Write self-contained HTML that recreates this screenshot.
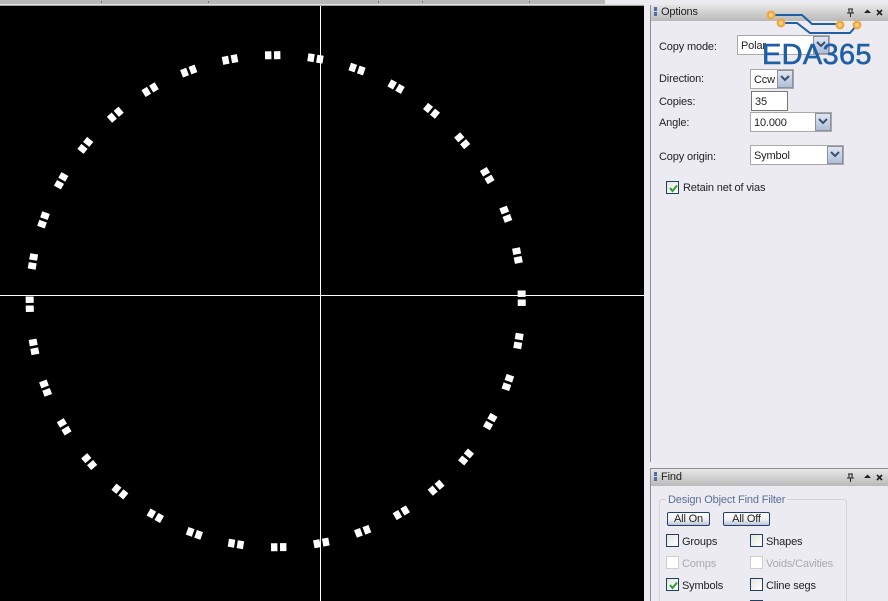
<!DOCTYPE html>
<html style="overflow:hidden;width:888px;height:601px"><head><meta charset="utf-8"><style>
html,body{margin:0;padding:0}
body{width:888px;height:601px;overflow:hidden;position:relative;background:#ecebf1;font-family:"Liberation Sans",sans-serif;font-size:11px;letter-spacing:-.15px;color:#222}
#w{position:absolute;left:0;top:0;width:888px;height:601px;overflow:hidden;background:#ecebf1}
.a{position:absolute}
.t{position:absolute;white-space:nowrap;line-height:14px}
.h{position:absolute;left:651px;width:237px;background:linear-gradient(#e8e8e8,#b9b9b9)}
.c{position:absolute;background:#fff;border:1px solid #a9a9ad;box-sizing:border-box;line-height:20px;padding-left:3px;white-space:nowrap}
.b{position:absolute;top:0;right:0;bottom:0;width:16px;background:linear-gradient(#dfe6f2,#aebfdc);border:1px solid #8d9096;box-sizing:border-box}
.b svg{position:absolute;left:2px;top:4px}
.k{position:absolute;width:13px;height:13px;box-sizing:border-box;border:1px solid #1f3f63;background:linear-gradient(135deg,#e4e4de,#fff)}
.k.d{border-color:#cfcfd2;background:#fff}
.btn{position:absolute;height:14px;box-sizing:border-box;border:1px solid #1f3f76;border-radius:2px;background:linear-gradient(#fff,#f0f0f0 55%,#b9c6da);text-align:center;line-height:13px}
.tk{position:absolute;top:1px;width:1px;height:2px;background:#777}
</style></head><body><div id="w">
<div class="a" style="left:0;top:0;width:605px;height:4px;background:#b7b7b7"></div>
<div class="tk" style="left:101px"></div><div class="tk" style="left:208px"></div><div class="tk" style="left:378px"></div><div class="tk" style="left:422px"></div><div class="tk" style="left:529px"></div>
<div class="a" style="left:0;top:4px;width:644px;height:1px;background:#e2e2e2"></div>
<div class="a" style="left:0;top:5px;width:644px;height:1px;background:#a2a2a2"></div>
<svg class="a" style="left:0;top:6px" width="644" height="595" viewBox="0 6 644 595">
<defs><g id="p" fill="#fff"><rect x="242" y="-7.700" width="8" height="6.400"/><rect x="242" y="1.300" width="8" height="6.400"/></g></defs>
<rect x="0" y="6" width="644" height="595" fill="#000"/>
<g transform="translate(275.700 301.200)">
<use href="#p" transform="rotate(-0.7)"/><use href="#p" transform="rotate(-10.7)"/><use href="#p" transform="rotate(-20.7)"/><use href="#p" transform="rotate(-30.7)"/><use href="#p" transform="rotate(-40.7)"/><use href="#p" transform="rotate(-50.7)"/><use href="#p" transform="rotate(-60.7)"/><use href="#p" transform="rotate(-70.7)"/><use href="#p" transform="rotate(-80.7)"/><use href="#p" transform="rotate(-90.7)"/><use href="#p" transform="rotate(-100.7)"/><use href="#p" transform="rotate(-110.7)"/><use href="#p" transform="rotate(-120.7)"/><use href="#p" transform="rotate(-130.7)"/><use href="#p" transform="rotate(-140.7)"/><use href="#p" transform="rotate(-150.7)"/><use href="#p" transform="rotate(-160.7)"/><use href="#p" transform="rotate(-170.7)"/><use href="#p" transform="rotate(-180.7)"/><use href="#p" transform="rotate(-190.7)"/><use href="#p" transform="rotate(-200.7)"/><use href="#p" transform="rotate(-210.7)"/><use href="#p" transform="rotate(-220.7)"/><use href="#p" transform="rotate(-230.7)"/><use href="#p" transform="rotate(-240.7)"/><use href="#p" transform="rotate(-250.7)"/><use href="#p" transform="rotate(-260.7)"/><use href="#p" transform="rotate(-270.7)"/><use href="#p" transform="rotate(-280.7)"/><use href="#p" transform="rotate(-290.7)"/><use href="#p" transform="rotate(-300.7)"/><use href="#p" transform="rotate(-310.7)"/><use href="#p" transform="rotate(-320.7)"/><use href="#p" transform="rotate(-330.7)"/><use href="#p" transform="rotate(-340.7)"/><use href="#p" transform="rotate(-350.7)"/>
</g>
<rect x="320" y="6" width="1" height="595" fill="#fff"/>
<rect x="0" y="295" width="644" height="1" fill="#fff"/>
</svg>
<div class="a" style="left:650px;top:5px;width:1px;height:457px;background:#8f8f93"></div>
<div class="a" style="left:650px;top:468px;width:1px;height:133px;background:#8f8f93"></div>

<div class="h" style="top:4px;height:17px"></div>
<div class="a" style="left:654px;top:7px;width:3px;height:4px;background:#4d6fa8"></div>
<div class="a" style="left:654px;top:12px;width:3px;height:4px;background:#4d6fa8"></div>
<div class="t" style="left:661px;top:5px">Options</div>
<svg class="a" style="left:846px;top:8px" width="38" height="9"><path d="M2 1h5M3 1v4M6 1v4M1 5h7M4.500 5v4" stroke="#222" fill="none"/><path d="M18 5h7l-3.500-3.500z" fill="#222"/><path d="M31 2l5 5M36 2l-5 5" stroke="#222" stroke-width="1.600"/></svg>

<div class="t" style="left:659px;top:40px">Copy mode:</div>
<div class="c" style="left:737px;top:35px;width:93px;height:20px">Polar<div class="b"><svg width="10" height="8"><path d="M1 1l4 4 4-4" fill="none" stroke="#3d4f6c" stroke-width="2"/></svg></div></div>
<div class="t" style="left:659px;top:72px">Direction:</div>
<div class="c" style="left:750px;top:69px;width:44px;height:20px">Ccw<div class="b"><svg width="10" height="8"><path d="M1 1l4 4 4-4" fill="none" stroke="#3d4f6c" stroke-width="2"/></svg></div></div>
<div class="t" style="left:659px;top:95px">Copies:</div>
<div class="c" style="left:751px;top:91px;width:37px;height:20px;border-color:#777">35</div>
<div class="t" style="left:659px;top:116px">Angle:</div>
<div class="c" style="left:750px;top:112px;width:82px;height:20px">10.000<div class="b"><svg width="10" height="8"><path d="M1 1l4 4 4-4" fill="none" stroke="#3d4f6c" stroke-width="2"/></svg></div></div>
<div class="t" style="left:659px;top:150px">Copy origin:</div>
<div class="c" style="left:750px;top:145px;width:94px;height:20px">Symbol<div class="b"><svg width="10" height="8"><path d="M1 1l4 4 4-4" fill="none" stroke="#3d4f6c" stroke-width="2"/></svg></div></div>
<div class="k" style="left:666px;top:181px"><svg class="a" style="left:1px;top:1px" width="11" height="11"><path d="M2 5l2.500 3L9 2.500" fill="none" stroke="#2fa12f" stroke-width="2"/></svg></div>
<div class="t" style="left:683px;top:181px">Retain net of vias</div>

<svg class="a" style="left:760px;top:5px" width="128" height="36">
<path d="M15 10H42L52 19H77M25 18H37L50 28H90L96 21" fill="none" stroke="#1f5fa6" stroke-width="2"/>
<g fill="#f7cf90" stroke="#f0a93b" stroke-width="2.500"><circle cx="11" cy="10" r="3.200"/><circle cx="21" cy="18" r="3.200"/><circle cx="80" cy="20" r="3.200"/><circle cx="97" cy="20" r="3.200"/></g>
</svg>
<div class="t" style="left:762px;top:39px;font-size:29px;line-height:32px;color:#1f5fa6;letter-spacing:.3px;-webkit-text-stroke:.6px #1f5fa6">EDA365</div>

<div class="h" style="top:468px;height:18px;border-top:1px solid #8f8f93;box-sizing:border-box"></div>
<div class="a" style="left:654px;top:472px;width:3px;height:4px;background:#4d6fa8"></div>
<div class="a" style="left:654px;top:477px;width:3px;height:4px;background:#4d6fa8"></div>
<div class="t" style="left:661px;top:470px">Find</div>
<svg class="a" style="left:846px;top:473px" width="38" height="9"><path d="M2 1h5M3 1v4M6 1v4M1 5h7M4.500 5v4" stroke="#222" fill="none"/><path d="M18 5h7l-3.500-3.500z" fill="#222"/><path d="M31 2l5 5M36 2l-5 5" stroke="#222" stroke-width="1.600"/></svg>

<div class="a" style="left:659px;top:499px;width:188px;height:110px;box-sizing:border-box;border:1px solid #d3d3d8;border-radius:3px"></div>
<div class="t" style="left:666px;top:493px;padding:0 2px;background:#ecebf1;color:#5a6f9a">Design Object Find Filter</div>
<div class="btn" style="left:667px;top:512px;width:43px">All On</div>
<div class="btn" style="left:723px;top:512px;width:47px">All Off</div>

<div class="k" style="left:666px;top:534px"></div><div class="t" style="left:682px;top:535px">Groups</div>
<div class="k" style="left:750px;top:534px"></div><div class="t" style="left:766px;top:535px">Shapes</div>
<div class="k d" style="left:666px;top:556px"></div><div class="t" style="left:682px;top:557px;color:#aaa">Comps</div>
<div class="k d" style="left:750px;top:556px"></div><div class="t" style="left:766px;top:557px;color:#aaa">Voids/Cavities</div>
<div class="k" style="left:666px;top:578px"><svg class="a" style="left:1px;top:1px" width="11" height="11"><path d="M2 5l2.500 3L9 2.500" fill="none" stroke="#2fa12f" stroke-width="2"/></svg></div><div class="t" style="left:682px;top:579px">Symbols</div>
<div class="k" style="left:750px;top:578px"></div><div class="t" style="left:766px;top:579px">Cline segs</div>
<div class="k" style="left:750px;top:600px"></div>
</div></body></html>
